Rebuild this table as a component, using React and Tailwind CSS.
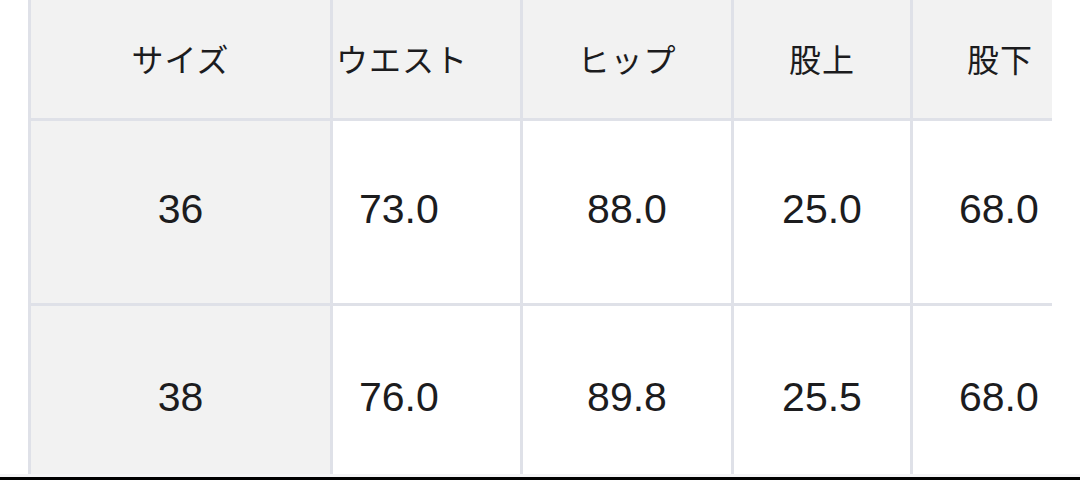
const headers = ["サイズ", "ウエスト", "ヒップ", "股上", "股下"];
const rows = [
  ["36", "73.0", "88.0", "25.0", "68.0"],
  ["38", "76.0", "89.8", "25.5", "68.0"],
];

// per-column alignment tweaks (the waist column hugs the left side in the screenshot)
const headCell = [
  "justify-center",
  "justify-start pl-[3px]",
  "justify-center",
  "justify-center",
  "justify-start pl-[54px]",
];
const bodyCell = [
  "justify-center",
  "justify-start pl-[26px]",
  "justify-center",
  "justify-center",
  "justify-start pl-[46px]",
];

const App = () => {
  return (
    <div
      className="w-[1080px] h-[480px] bg-white overflow-hidden flex flex-col text-[#1c1c1e]"
      style={{ fontFamily: '"Liberation Sans", Arial, "Noto Sans CJK JP", sans-serif' }}
    >
      <div className="flex-1 pl-[28px] overflow-hidden">
        <div className="grid grid-cols-[299px_187px_208px_176px_139px] gap-[3px] bg-[#dfe1e8] w-[1024px] border-l-[3px] border-[#dfe1e8]">
          {headers.map((h, i) => (
            <div
              key={h}
              className={`h-[118px] bg-[#f2f2f2] flex items-center text-[32px] tracking-[1px] ${headCell[i]}`}
              style={{ fontFamily: '"Noto Sans CJK JP", sans-serif' }}
            >
              <span className="-mt-[2px]">{h}</span>
            </div>
          ))}
          {rows.map((r, ri) =>
            r.map((v, ci) => (
              <div
                key={`${ri}-${ci}`}
                className={`${ri === 0 ? "h-[182px]" : "h-[170px]"} flex items-center text-[41px] ${
                  ci === 0 ? "bg-[#f2f2f2]" : "bg-white"
                } ${bodyCell[ci]}`}
              >
                <span className={ri === 0 ? "-mt-[4px]" : "mt-[14px]"}>{v}</span>
              </div>
            ))
          )}
        </div>
      </div>
      <div className="h-[3px] bg-[#f4f4f6]" />
      <div className="h-[3px] bg-black" />
    </div>
  );
};

export default App;
